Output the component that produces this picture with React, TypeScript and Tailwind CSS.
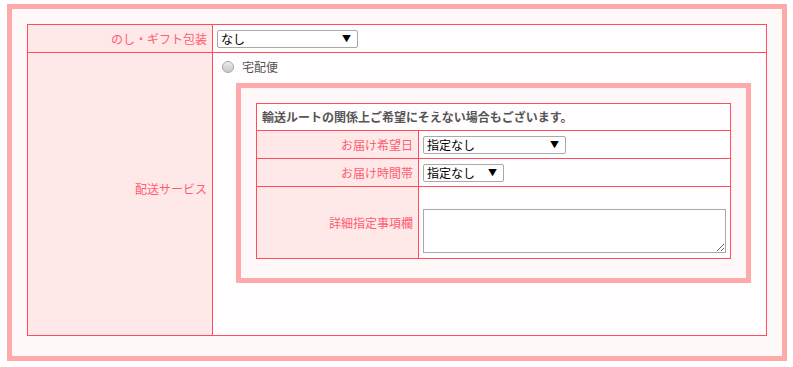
import React from 'react';

const font = { fontFamily: '"Noto Sans CJK JP", "Liberation Sans", sans-serif' };

const FakeSelect: React.FC<{ value: string; width: string }> = ({ value, width }) => (
  <div
    className={`${width} h-[18px] flex items-center justify-between border border-[#a9a9a9] rounded-[2px] bg-white pl-[3px] pr-[6px] text-[12px] leading-none text-black`}
  >
    <span>{value}</span>
    <span className="text-[9px]">▼</span>
  </div>
);

export default function App() {
  return (
    <div className="bg-white w-[793px] h-[367px] pt-[4px] pl-[7px]" style={font}>
      <div className="w-[780px] h-[357px] border-[5px] border-[#ffaaaa] bg-[#fff8f8] px-[15px] pt-[15px]">
        <table className="w-[740px] border-collapse text-[12px]">
          <tbody>
            <tr className="h-[28px]">
              <th className="w-[185px] border border-[#ff4d5e] bg-[#ffe8e8] text-right font-normal text-[#ff5c70] pr-[5px]">
                のし・ギフト包装
              </th>
              <td className="border border-[#ff4d5e] bg-[#fffdfd] pl-[4px]">
                <FakeSelect value="なし" width="w-[141px]" />
              </td>
            </tr>
            <tr className="h-[283px]">
              <th className="border border-[#ff4d5e] bg-[#ffe8e8] text-right font-normal text-[#ff5c70] pr-[5px] align-middle">
                <span className="relative top-[-5px]">配送サービス</span>
              </th>
              <td className="border border-[#ff4d5e] bg-[#fffdfd] align-top pl-[9px] pt-[7px]">
                <label className="flex items-center gap-[8px] text-[#555] h-[14px]">
                  <span className="w-[12px] h-[12px] rounded-full border border-[#a8a8a8] bg-gradient-to-b from-[#ececec] to-[#c8c8c8]" />
                  <span>宅配便</span>
                </label>
                <div className="ml-[14px] mt-[9px] w-[515px] h-[200px] border-[5px] border-[#ffaaaa] bg-[#fff8f8] px-[15px] pt-[15px]">
                  <table className="w-[475px] border-collapse text-[12px]">
                    <tbody>
                      <tr className="h-[27px]">
                        <td colSpan={2} className="border border-[#ff4d5e] bg-[#fffdfd] pl-[5px] font-bold text-[#555]">
                          輸送ルートの関係上ご希望にそえない場合もございます。
                        </td>
                      </tr>
                      <tr className="h-[28px]">
                        <th className="w-[162px] border border-[#ff4d5e] bg-[#ffe8e8] text-right font-normal text-[#ff5c70] pr-[5px]">
                          お届け希望日
                        </th>
                        <td className="border border-[#ff4d5e] bg-[#fffdfd] pl-[4px]">
                          <FakeSelect value="指定なし" width="w-[143px]" />
                        </td>
                      </tr>
                      <tr className="h-[28px]">
                        <th className="border border-[#ff4d5e] bg-[#ffe8e8] text-right font-normal text-[#ff5c70] pr-[5px]">
                          お届け時間帯
                        </th>
                        <td className="border border-[#ff4d5e] bg-[#fffdfd] pl-[4px]">
                          <FakeSelect value="指定なし" width="w-[81px]" />
                        </td>
                      </tr>
                      <tr className="h-[72px]">
                        <th className="border border-[#ff4d5e] bg-[#ffe8e8] text-right font-normal text-[#ff5c70] pr-[5px]">
                          詳細指定事項欄
                        </th>
                        <td className="border border-[#ff4d5e] bg-[#fffdfd] pl-[4px] pt-[21px] pb-[5px]">
                          <textarea className="block w-[303px] h-[44px] border border-[#a9a9a9] bg-white resize" />
                        </td>
                      </tr>
                    </tbody>
                  </table>
                </div>
              </td>
            </tr>
          </tbody>
        </table>
      </div>
    </div>
  );
}
